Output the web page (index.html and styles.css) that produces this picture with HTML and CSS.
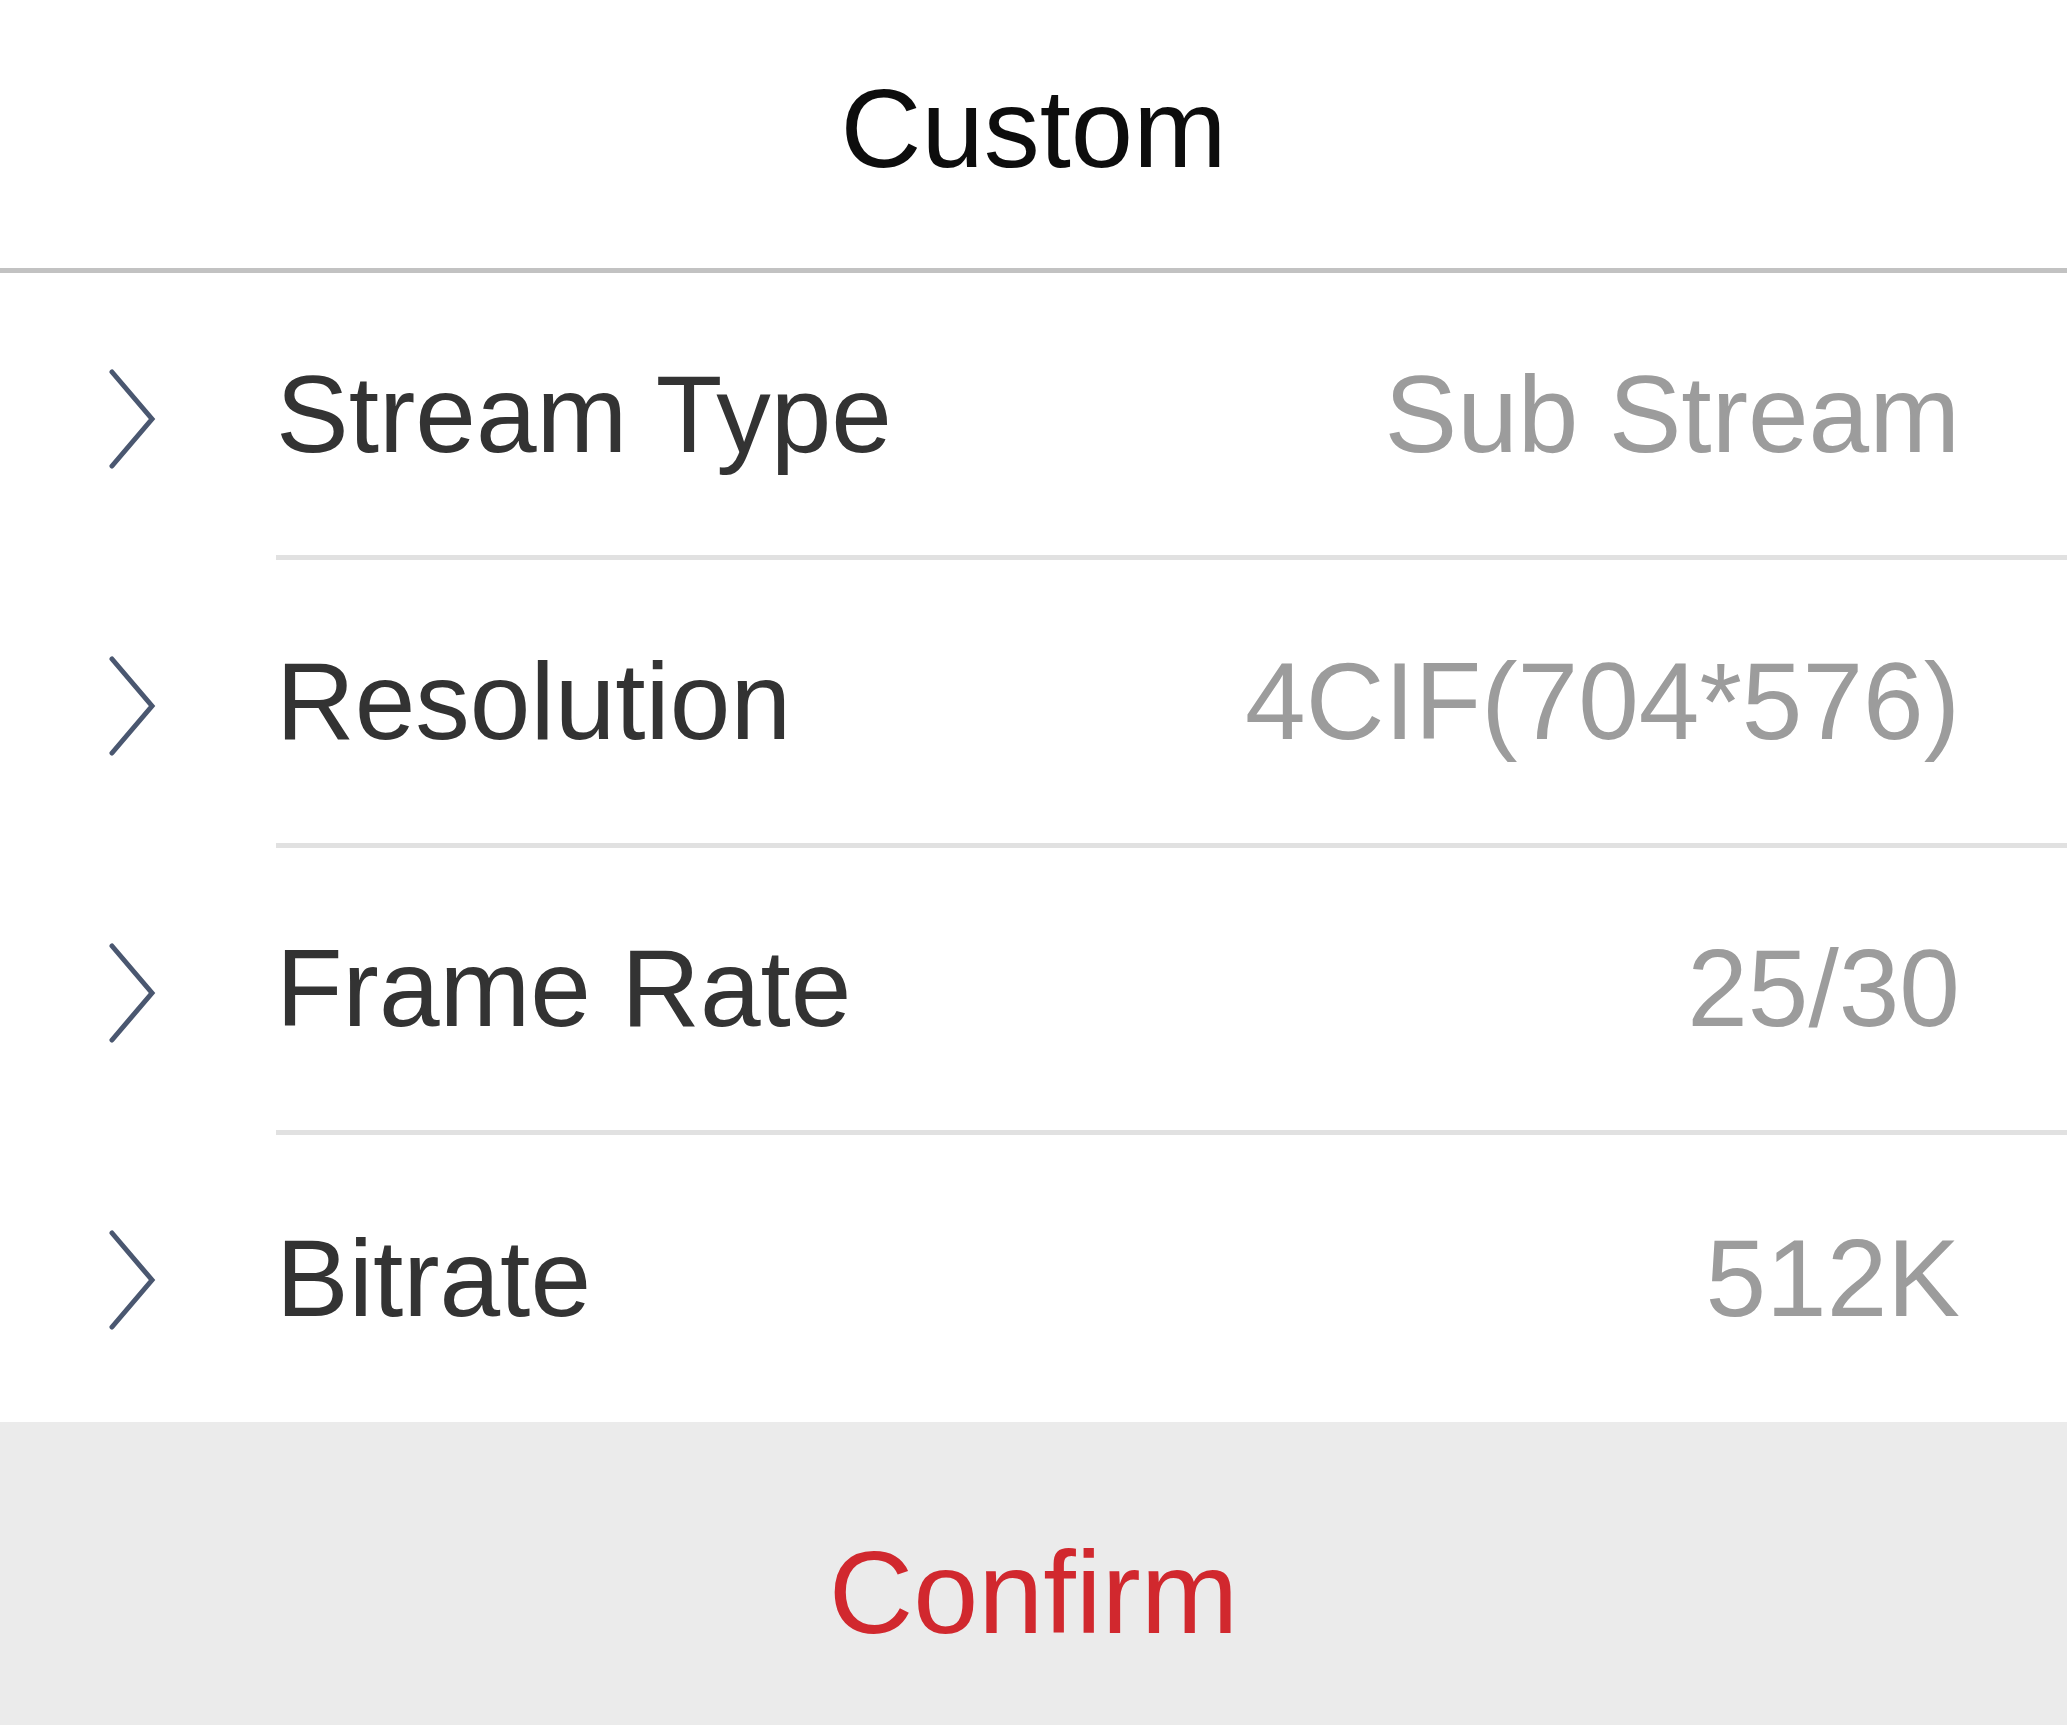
FILE: index.html
```html
<!DOCTYPE html>
<html lang="en">
<head>
<meta charset="utf-8">
<title>Custom</title>
<link rel="stylesheet" href="styles.css">
</head>
<body>
<div class="sheet">
  <header class="sheet-header">
    <h1 class="sheet-title">Custom</h1>
  </header>
  <ul class="option-list">
    <li class="option">
      <div class="option-icon">
        <svg class="chevron" width="50" height="100" viewBox="0 0 50 100"><polyline points="3,3 43,50 3,97" /></svg>
      </div>
      <div class="option-main">
        <span class="option-label">Stream Type</span>
        <span class="option-value">Sub Stream</span>
      </div>
    </li>
    <li class="option">
      <div class="option-icon">
        <svg class="chevron" width="50" height="100" viewBox="0 0 50 100"><polyline points="3,3 43,50 3,97" /></svg>
      </div>
      <div class="option-main">
        <span class="option-label">Resolution</span>
        <span class="option-value">4CIF(704*576)</span>
      </div>
    </li>
    <li class="option">
      <div class="option-icon">
        <svg class="chevron" width="50" height="100" viewBox="0 0 50 100"><polyline points="3,3 43,50 3,97" /></svg>
      </div>
      <div class="option-main">
        <span class="option-label">Frame Rate</span>
        <span class="option-value">25/30</span>
      </div>
    </li>
    <li class="option option-last">
      <div class="option-icon">
        <svg class="chevron" width="50" height="100" viewBox="0 0 50 100"><polyline points="3,3 43,50 3,97" /></svg>
      </div>
      <div class="option-main">
        <span class="option-label">Bitrate</span>
        <span class="option-value">512K</span>
      </div>
    </li>
  </ul>
  <footer class="sheet-footer">
    <button class="confirm-btn" type="button">Confirm</button>
  </footer>
</div>
</body>
</html>
```

FILE: styles.css
```css
* {
  box-sizing: border-box;
}

html, body {
  margin: 0;
  padding: 0;
  background: #ffffff;
}

body {
  font-family: "Liberation Sans", Arial, Helvetica, sans-serif;
}

.sheet {
  display: flex;
  flex-direction: column;
  width: 2067px;
  height: 1725px;
  background: #ffffff;
}

.sheet-header {
  height: 273px;
  flex: 0 0 auto;
  display: flex;
  align-items: center;
  justify-content: center;
  border-bottom: 5px solid #c2c2c2;
  padding-bottom: 10px;
}

.sheet-title {
  margin: 0;
  font-size: 112px;
  font-weight: 400;
  color: #0d0d0d;
  line-height: 1;
}

.option-list {
  list-style: none;
  margin: 0;
  padding: 0;
  flex: 1 1 auto;
  display: flex;
  flex-direction: column;
}

.option {
  flex: 1 1 0;
  display: flex;
  align-items: stretch;
}

.option-icon {
  width: 276px;
  flex: 0 0 276px;
  display: flex;
  align-items: center;
  padding-left: 109px;
  padding-top: 4px;
}

.chevron {
  display: block;
  fill: none;
  stroke: #4a5770;
  stroke-width: 5;
  stroke-linecap: round;
  stroke-linejoin: miter;
}

.option-main {
  flex: 1 1 auto;
  display: flex;
  align-items: center;
  justify-content: space-between;
  padding-right: 107px;
  border-bottom: 5px solid #e1e1e1;
}

.option-last .option-main {
  border-bottom: none;
}

.option-label {
  font-size: 109px;
  color: #333333;
  line-height: 1;
}

.option-value {
  font-size: 109px;
  color: #9c9c9c;
  line-height: 1;
}

.sheet-footer {
  height: 303px;
  flex: 0 0 auto;
  background: #ebebeb;
  display: flex;
  align-items: center;
  justify-content: center;
  padding-top: 38px;
}

.confirm-btn {
  border: none;
  background: transparent;
  padding: 0;
  margin: 0;
  font-family: "Liberation Sans", Arial, Helvetica, sans-serif;
  font-size: 117px;
  color: #d1282e;
  line-height: 1;
  cursor: pointer;
}
```
